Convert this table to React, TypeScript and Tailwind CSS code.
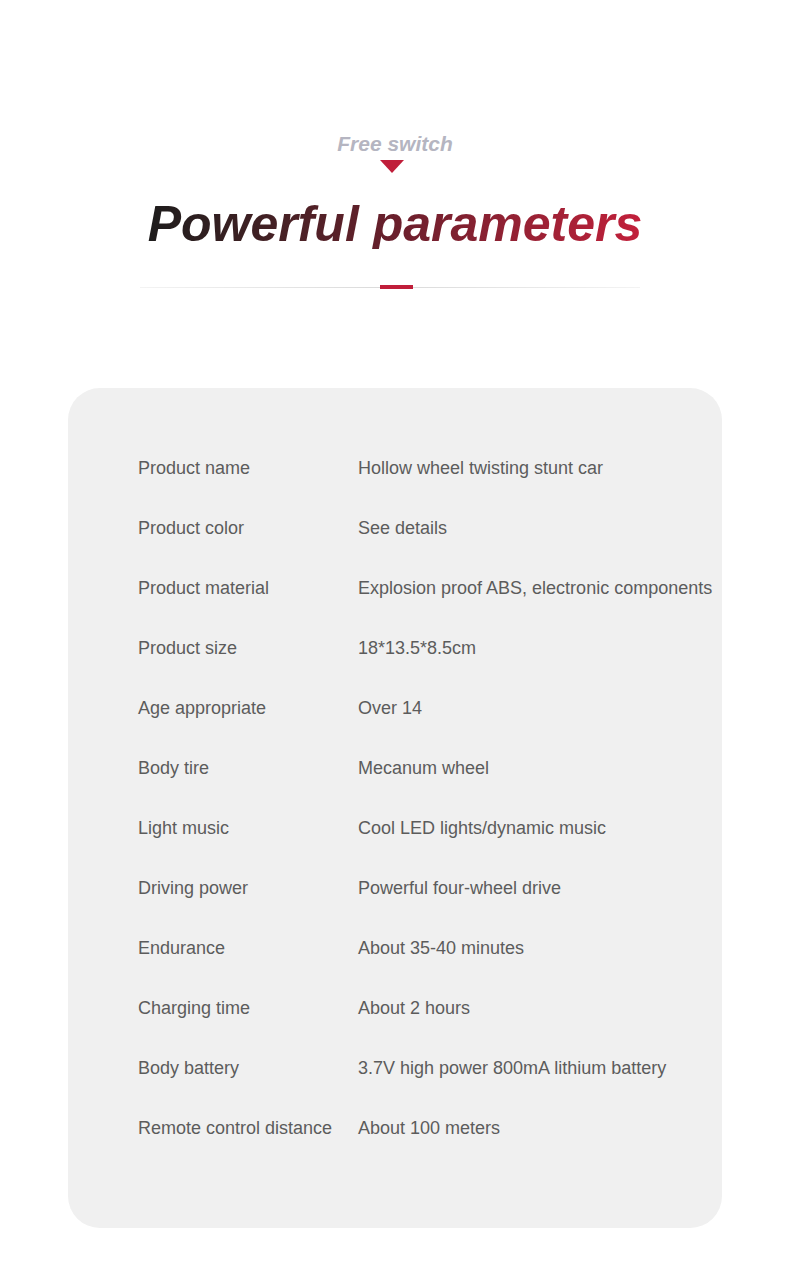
const specs: { label: string; value: string }[] = [
  { label: "Product name", value: "Hollow wheel twisting stunt car" },
  { label: "Product color", value: "See details" },
  { label: "Product material", value: "Explosion proof ABS, electronic components" },
  { label: "Product size", value: "18*13.5*8.5cm" },
  { label: "Age appropriate", value: "Over 14" },
  { label: "Body tire", value: "Mecanum wheel" },
  { label: "Light music", value: "Cool LED lights/dynamic music" },
  { label: "Driving power", value: "Powerful four-wheel drive" },
  { label: "Endurance", value: "About 35-40 minutes" },
  { label: "Charging time", value: "About 2 hours" },
  { label: "Body battery", value: "3.7V high power 800mA lithium battery" },
  { label: "Remote control distance", value: "About 100 meters" },
];

function SectionHeader() {
  return (
    <div className="flex flex-col items-center">
      <div className="mt-[133px] text-[21px] leading-[21px] font-bold italic text-[#b5b5c1]">Free switch</div>
      <svg className="mt-[6px] mr-[6px]" width="24" height="13" viewBox="0 0 24 13">
        <polygon points="0,0 24,0 12,13" fill="#c01e3a" />
      </svg>
      <h2 className="mt-[26px] bg-gradient-to-r from-[#1c1c1c] via-[#6a1f2c] to-[#c41f3b] bg-clip-text px-1 text-[50px] leading-[50px] font-bold italic text-transparent">
        Powerful parameters
      </h2>
      <div className="relative mt-[36px] mr-[10px] flex h-[4px] w-[500px] items-center justify-center">
        <div className="h-px w-full bg-gradient-to-r from-[#f3f3f3] via-[#dadada] to-[#f3f3f3]" />
        <div className="absolute left-[240px] top-0 h-[4px] w-[33px] bg-[#c01e3a]" />
      </div>
    </div>
  );
}

export default function App() {
  return (
    <div className="h-[1275px] w-[790px] overflow-hidden bg-white font-['Liberation_Sans',Arial,sans-serif]">
      <SectionHeader />
      <div className="mx-[68px] mt-[99px] h-[840px] rounded-[32px] bg-[#f0f0f0] pt-[50px] pl-[70px]">
        {specs.map((row) => (
          <div key={row.label} className="flex h-[60px] items-center text-[18px] text-[#5c5c5c]">
            <span className="w-[220px] shrink-0">{row.label}</span>
            <span className="whitespace-nowrap">{row.value}</span>
          </div>
        ))}
      </div>
    </div>
  );
}
